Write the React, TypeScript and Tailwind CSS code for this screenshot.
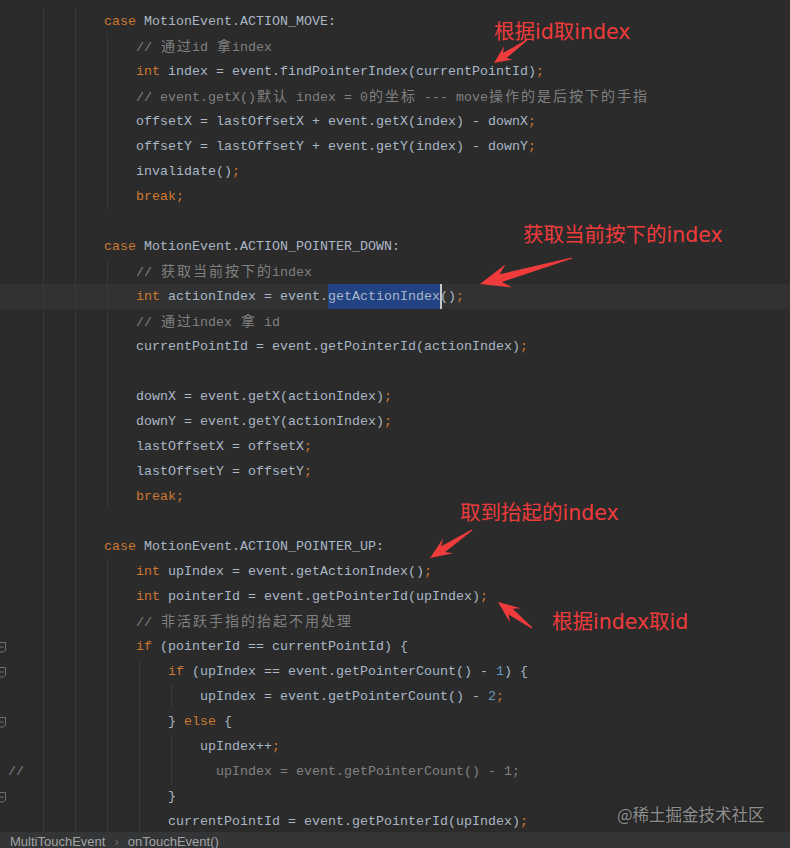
import React from 'react';

const LINES: string[] = [
  '            case MotionEvent.ACTION_MOVE:',
  '                // 通过id 拿index',
  '                int index = event.findPointerIndex(currentPointId);',
  '                // event.getX()默认 index = 0的坐标 --- move操作的是后按下的手指',
  '                offsetX = lastOffsetX + event.getX(index) - downX;',
  '                offsetY = lastOffsetY + event.getY(index) - downY;',
  '                invalidate();',
  '                break;',
  '',
  '            case MotionEvent.ACTION_POINTER_DOWN:',
  '                // 获取当前按下的index',
  '                int actionIndex = event.getActionIndex();',
  '                // 通过index 拿 id',
  '                currentPointId = event.getPointerId(actionIndex);',
  '',
  '                downX = event.getX(actionIndex);',
  '                downY = event.getY(actionIndex);',
  '                lastOffsetX = offsetX;',
  '                lastOffsetY = offsetY;',
  '                break;',
  '',
  '            case MotionEvent.ACTION_POINTER_UP:',
  '                int upIndex = event.getActionIndex();',
  '                int pointerId = event.getPointerId(upIndex);',
  '                // 非活跃手指的抬起不用处理',
  '                if (pointerId == currentPointId) {',
  '                    if (upIndex == event.getPointerCount() - 1) {',
  '                        upIndex = event.getPointerCount() - 2;',
  '                    } else {',
  '                        upIndex++;',
  '//                        upIndex = event.getPointerCount() - 1;',
  '                    }',
  '                    currentPointId = event.getPointerId(upIndex);'
];

const CURRENT_LINE = 11;
const FOLD_LINES = [25, 26, 28, 31];

/** indent guide x positions for a given line */
function guidesFor(i: number) {
  const g = [43, 75];
  if ((i >= 1 && i <= 7) || (i >= 10 && i <= 19) || i >= 22) g.push(107);
  if (i >= 26) g.push(139);
  if (i === 27 || i === 29 || i === 30) g.push(171);
  return g;
}

type Tok = { t: string; c: string };

function highlight(code: string): Tok[] {
  const out: Tok[] = [];
  const ci = code.indexOf('//');
  const main = ci >= 0 ? code.slice(0, ci) : code;
  const re = /\b(case|int|break|if|else)\b|;|\b\d+\b/g;
  let last = 0;
  let m: RegExpExecArray | null;
  while ((m = re.exec(main))) {
    if (m.index > last) out.push({ t: main.slice(last, m.index), c: 'text-[#a9b7c6]' });
    const isNum = /^\d+$/.test(m[0]);
    out.push({ t: m[0], c: isNum ? 'text-[#6897bb]' : 'text-[#cc7832]' });
    last = m.index + m[0].length;
  }
  if (last < main.length) out.push({ t: main.slice(last), c: 'text-[#a9b7c6]' });
  if (ci >= 0) out.push({ t: code.slice(ci), c: 'text-[#808080]' });
  return out;
}

/** CJK glyphs take two columns in the editor font */
function CodeText({ text }: { text: string }) {
  const parts = text.split(/([\u3000-\u9fff\uff00-\uffef]+)/);
  return (
    <>
      {parts.map((p, i) =>
        /[\u3000-\u9fff\uff00-\uffef]/.test(p) ? (
          p.split('').map((ch, j) => (
            <span
              key={`${i}-${j}`}
              className="inline-block w-4 text-center text-[14px] font-['Noto_Sans_CJK_SC',sans-serif]"
            >
              {ch}
            </span>
          ))
        ) : (
          <React.Fragment key={i}>{p}</React.Fragment>
        )
      )}
    </>
  );
}

function FoldIcon() {
  return (
    <svg width="8" height="12" viewBox="0 0 8 12" className="text-[#707070]">
      <path d="M0 1.5 H5.5 V9 L3.5 11 H0" fill="none" stroke="currentColor" strokeWidth="1" />
      <path d="M0 6 H3.5" stroke="currentColor" strokeWidth="1" />
    </svg>
  );
}

function CodeLine({ code, index }: { code: string; index: number }) {
  const isCurrent = index === CURRENT_LINE;
  return (
    <div className={`relative flex h-[25px] items-center ${isCurrent ? 'bg-[#323232]' : ''}`}>
      {guidesFor(index).map((x) => (
        <span key={x} className="absolute top-0 bottom-0 w-px bg-[#393939]" style={{ left: x }} />
      ))}
      {isCurrent && (
        <>
          <span className="absolute top-0 bottom-0 left-[328px] w-[112px] bg-[#214283]" />
          <span className="absolute top-0 bottom-0 left-[440px] w-[2px] bg-[#c8c8c8]" />
        </>
      )}
      <span className="relative flex w-2 shrink-0 items-center">{FOLD_LINES.includes(index) && <FoldIcon />}</span>
      <span className="relative whitespace-pre">
        {highlight(code).map((tk, i) => (
          <span key={i} className={tk.c}>
            <CodeText text={tk.t} />
          </span>
        ))}
      </span>
    </div>
  );
}

/** red annotation arrow, swept-back head like a snipping tool arrow */
function arrowPoints(x1: number, y1: number, x2: number, y2: number, head: number, hw: number, sw: number) {
  const dx = x2 - x1;
  const dy = y2 - y1;
  const len = Math.hypot(dx, dy);
  const ux = dx / len;
  const uy = dy / len;
  const px = -uy;
  const py = ux;
  const nx = x2 - ux * head * 0.72;
  const ny = y2 - uy * head * 0.72;
  const bx = x2 - ux * head;
  const by = y2 - uy * head;
  const pts = [
    [x1 + px * 0.6, y1 + py * 0.6],
    [nx + px * sw, ny + py * sw],
    [bx + px * hw, by + py * hw],
    [x2, y2],
    [bx - px * hw, by - py * hw],
    [nx - px * sw, ny - py * sw],
    [x1 - px * 0.6, y1 - py * 0.6]
  ];
  return pts.map((p) => `${p[0].toFixed(1)},${p[1].toFixed(1)}`).join(' ');
}

const ARROWS = [
  { x1: 527, y1: 40, x2: 494, y2: 63, head: 18, hw: 8, sw: 3 },
  { x1: 572, y1: 258, x2: 480, y2: 284, head: 30, hw: 12, sw: 4 },
  { x1: 472, y1: 530, x2: 430, y2: 558, head: 22, hw: 9, sw: 3.5 },
  { x1: 532, y1: 628, x2: 498, y2: 602, head: 22, hw: 9, sw: 3.5 }
];

const NOTES = [
  { text: '根据id取index', cls: 'left-[494px] top-[17px]' },
  { text: '获取当前按下的index', cls: 'left-[523px] top-[220px]' },
  { text: '取到抬起的index', cls: 'left-[460px] top-[498px]' },
  { text: '根据index取id', cls: 'left-[552px] top-[607px]' }
];

export default function App() {
  return (
    <div className="relative flex h-[848px] w-[790px] flex-col overflow-hidden bg-[#2b2b2b] font-['Liberation_Mono','Noto_Sans_CJK_SC',monospace] text-[13.333px]">
      <div className="flex-1 overflow-hidden pt-[9px]">
        {LINES.map((code, i) => (
          <CodeLine key={i} code={code} index={i} />
        ))}
      </div>

      <div className="flex h-[16px] shrink-0 items-start gap-[9px] bg-[#333537] pl-[10px] pt-[2px] font-['Liberation_Sans',sans-serif] text-[13px] leading-[16px] text-[#a4a4a4]">
        <span>MultiTouchEvent</span>
        <span className="text-[#6a6a6a]">›</span>
        <span>onTouchEvent()</span>
      </div>

      {/* annotations drawn over the screenshot */}
      <svg className="pointer-events-none absolute left-0 top-0" width="790" height="848">
        {ARROWS.map((a, i) => (
          <polygon key={i} points={arrowPoints(a.x1, a.y1, a.x2, a.y2, a.head, a.hw, a.sw)} fill="#ef3b3b" />
        ))}
      </svg>
      {NOTES.map((n) => (
        <div
          key={n.text}
          className={`absolute ${n.cls} font-['DejaVu_Sans','Noto_Sans_CJK_SC',sans-serif] text-[20.5px] leading-[30px] whitespace-nowrap text-[#ef3b3b]`}
        >
          {n.text}
        </div>
      ))}
      <div className="absolute left-[617px] top-[802px] font-['Noto_Sans_CJK_SC',sans-serif] text-[16.5px] leading-[24px] text-[#8e8e8e] [text-shadow:0_0_2px_#1a1a1a]">
        @稀土掘金技术社区
      </div>
    </div>
  );
}
